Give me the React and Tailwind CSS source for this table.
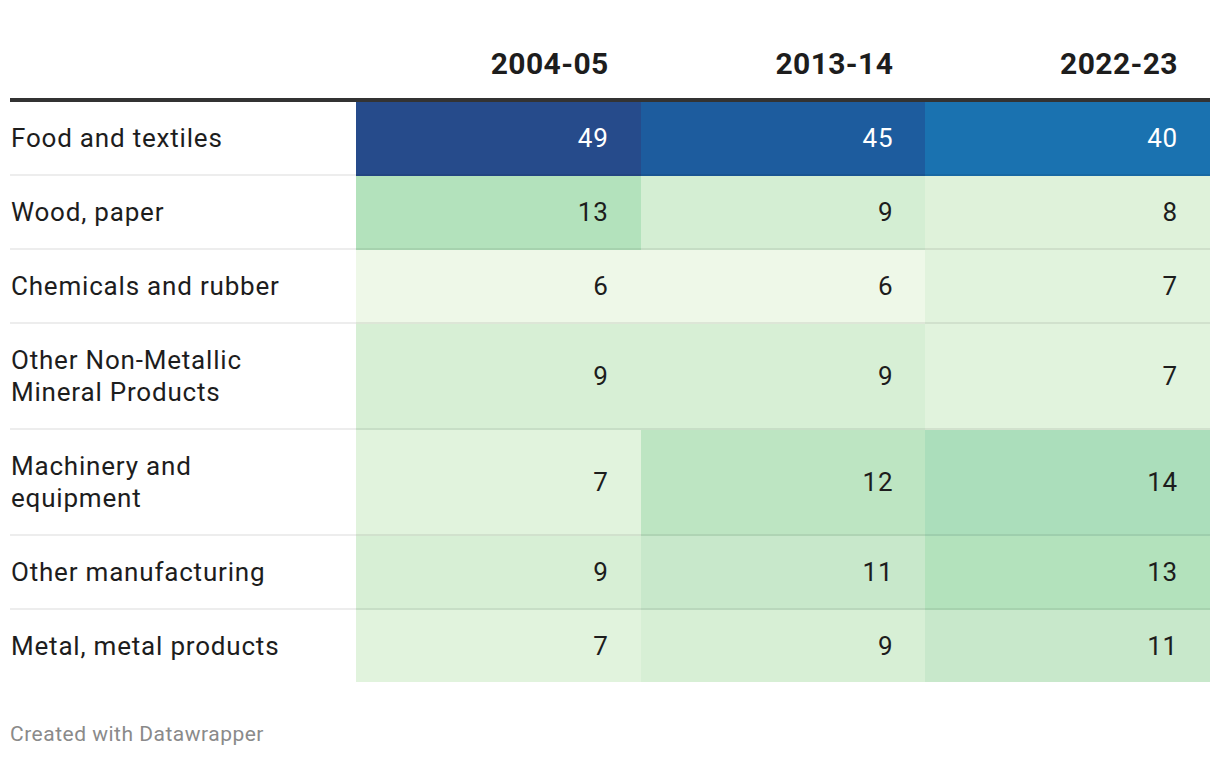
import React from 'react'

const rows = [
  { label: 'Food and textiles', values: [49, 45, 40], bg: ['bg-[#264b8b]', 'bg-[#1d5c9e]', 'bg-[#1a72b0]'], dark: true },
  { label: 'Wood, paper', values: [13, 9, 8], bg: ['bg-[#b3e2bc]', 'bg-[#d4eed3]', 'bg-[#dff2da]'] },
  { label: 'Chemicals and rubber', values: [6, 6, 7], bg: ['bg-[#eef8e8]', 'bg-[#eef8e8]', 'bg-[#e1f3dd]'] },
  { label: ['Other Non-Metallic', 'Mineral Products'], values: [9, 9, 7], bg: ['bg-[#d7efd5]', 'bg-[#d7efd5]', 'bg-[#e1f3dd]'] },
  { label: ['Machinery and', 'equipment'], values: [7, 12, 14], bg: ['bg-[#e1f3dd]', 'bg-[#bde5c2]', 'bg-[#abdebb]'] },
  { label: 'Other manufacturing', values: [9, 11, 13], bg: ['bg-[#d7efd5]', 'bg-[#c8e8cb]', 'bg-[#b3e2bc]'] },
  { label: 'Metal, metal products', values: [7, 9, 11], bg: ['bg-[#e1f3dd]', 'bg-[#d7efd5]', 'bg-[#c8e8cb]'] },
]

const years = ['2004-05', '2013-14', '2022-23']

export default function App() {
  return (
    <div className="w-[1220px] h-[758px] bg-white px-[10px] font-['Roboto',sans-serif] text-[#1d1d1d]">
      {/* header */}
      <div className="grid grid-cols-[346px_1fr_1fr_1fr] border-b-4 border-[#333333]">
        <div />
        {years.map((y) => (
          <div key={y} className="pt-[46px] pb-4 pr-8 text-right text-[30px] leading-[36px] font-bold tracking-[0.4px]">
            {y}
          </div>
        ))}
      </div>

      {/* body */}
      {rows.map((r, i) => {
        const last = i === rows.length - 1
        const border = last ? '' : 'border-b-2 border-black/[0.07]'
        return (
          <div key={i} className="grid grid-cols-[346px_1fr_1fr_1fr] text-[26px] leading-[32px] tracking-[0.8px]">
            <div className={`py-5 pl-px ${border}`}>
              {Array.isArray(r.label) ? r.label.map((l) => <div key={l}>{l}</div>) : r.label}
            </div>
            {r.values.map((v, j) => (
              <div
                key={j}
                className={`flex items-center justify-end py-5 pr-8 ${border} ${r.bg[j]} ${r.dark ? 'text-white' : ''}`}
              >
                {v}
              </div>
            ))}
          </div>
        )
      })}

      <div className="mt-[40px] text-[21px] leading-[24px] tracking-[0.5px] text-[#8a8a8a]">Created with Datawrapper</div>
    </div>
  )
}
